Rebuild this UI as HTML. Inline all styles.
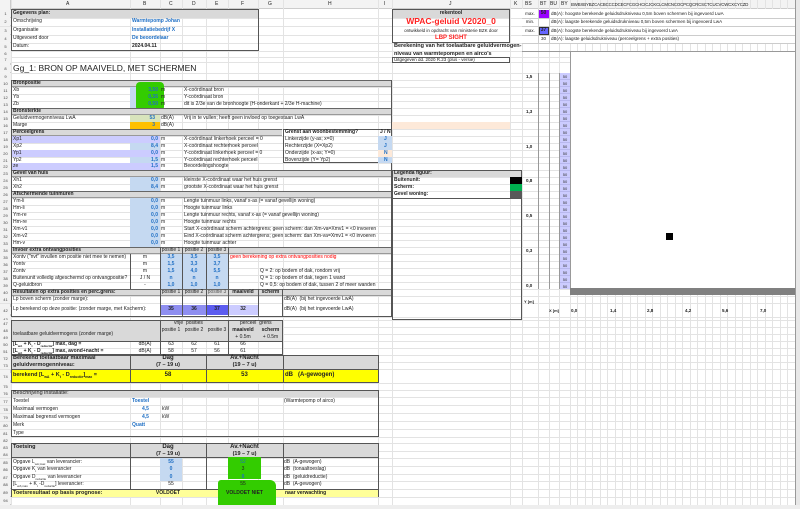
<!DOCTYPE html>
<html><head><meta charset="utf-8"><style>
*{margin:0;padding:0;box-sizing:border-box}
body{width:800px;height:509px;overflow:hidden;background:#fff;position:relative;font-family:"Liberation Sans",sans-serif}
.h{position:absolute;left:0;width:795px;height:1px;background:#e3e3e3}
.v{position:absolute;top:0;height:509px;width:1px;background:#e3e3e3}
.c{position:absolute;font-size:5px;line-height:7px;white-space:nowrap;color:#222}
.b{font-weight:bold}
.bl{color:#1f6fc4;font-weight:bold}
.r{text-align:right}.m{text-align:center}
.box{position:absolute}
.sec{position:absolute;background:#d9d9d9;border-top:1px solid #666;border-bottom:1px solid #999}
.rn{position:absolute;left:0;width:11px;font-size:4px;line-height:7px;text-align:center;color:#444;background:#f2f2f2}
</style></head><body>
<div class="box" style="left:0;top:0;width:800px;height:9px;background:#f3f3f3;border-bottom:1px solid #ccc"></div>
<div class="box" style="left:0;top:0;width:11px;height:509px;background:#f3f3f3;border-right:1px solid #ccc"></div>
<div class="h" style="top:18px"></div><div class="h" style="top:26px"></div><div class="h" style="top:35px"></div><div class="h" style="top:43px"></div><div class="h" style="top:51px"></div><div class="h" style="top:57px"></div><div class="h" style="top:62px"></div><div class="h" style="top:73px"></div><div class="h" style="top:80px"></div><div class="h" style="top:87px"></div><div class="h" style="top:94px"></div><div class="h" style="top:101px"></div><div class="h" style="top:108px"></div><div class="h" style="top:115px"></div><div class="h" style="top:122px"></div><div class="h" style="top:129px"></div><div class="h" style="top:136px"></div><div class="h" style="top:143px"></div><div class="h" style="top:150px"></div><div class="h" style="top:157px"></div><div class="h" style="top:163px"></div><div class="h" style="top:170px"></div><div class="h" style="top:177px"></div><div class="h" style="top:184px"></div><div class="h" style="top:191px"></div><div class="h" style="top:198px"></div><div class="h" style="top:205px"></div><div class="h" style="top:212px"></div><div class="h" style="top:219px"></div><div class="h" style="top:226px"></div><div class="h" style="top:233px"></div><div class="h" style="top:240px"></div><div class="h" style="top:247px"></div><div class="h" style="top:254px"></div><div class="h" style="top:261px"></div><div class="h" style="top:268px"></div><div class="h" style="top:275px"></div><div class="h" style="top:282px"></div><div class="h" style="top:289px"></div><div class="h" style="top:296px"></div><div class="h" style="top:303px"></div><div class="h" style="top:317px"></div><div class="h" style="top:320px"></div><div class="h" style="top:327px"></div><div class="h" style="top:334px"></div><div class="h" style="top:341px"></div><div class="h" style="top:348px"></div><div class="h" style="top:355px"></div><div class="h" style="top:362px"></div><div class="h" style="top:369px"></div><div class="h" style="top:383px"></div><div class="h" style="top:390px"></div><div class="h" style="top:397px"></div><div class="h" style="top:405px"></div><div class="h" style="top:413px"></div><div class="h" style="top:421px"></div><div class="h" style="top:429px"></div><div class="h" style="top:437px"></div><div class="h" style="top:443px"></div><div class="h" style="top:451px"></div><div class="h" style="top:458px"></div><div class="h" style="top:466px"></div><div class="h" style="top:474px"></div><div class="h" style="top:481px"></div><div class="h" style="top:489px"></div><div class="h" style="top:497px"></div><div class="h" style="top:505px"></div>
<div class="v" style="left:11px"></div><div class="v" style="left:130px"></div><div class="v" style="left:160px"></div><div class="v" style="left:182px"></div><div class="v" style="left:206px"></div><div class="v" style="left:228px"></div><div class="v" style="left:258px"></div><div class="v" style="left:283px"></div><div class="v" style="left:378px"></div><div class="v" style="left:392px"></div><div class="v" style="left:510px"></div><div class="v" style="left:522px"></div><div class="v" style="left:538px"></div><div class="v" style="left:549px"></div><div class="v" style="left:559px"></div><div class="v" style="left:570px"></div><div class="v" style="left:577px"></div><div class="v" style="left:585px"></div><div class="v" style="left:592px"></div><div class="v" style="left:600px"></div><div class="v" style="left:607px"></div><div class="v" style="left:615px"></div><div class="v" style="left:622px"></div><div class="v" style="left:630px"></div><div class="v" style="left:637px"></div><div class="v" style="left:645px"></div><div class="v" style="left:652px"></div><div class="v" style="left:660px"></div><div class="v" style="left:667px"></div><div class="v" style="left:675px"></div><div class="v" style="left:682px"></div><div class="v" style="left:690px"></div><div class="v" style="left:697px"></div><div class="v" style="left:705px"></div><div class="v" style="left:712px"></div><div class="v" style="left:720px"></div><div class="v" style="left:727px"></div><div class="v" style="left:735px"></div><div class="v" style="left:742px"></div><div class="v" style="left:750px"></div><div class="v" style="left:757px"></div><div class="v" style="left:765px"></div><div class="v" style="left:772px"></div><div class="v" style="left:780px"></div><div class="v" style="left:787px"></div>
<div class="box" style="left:795px;top:0;width:5px;height:509px;background:#e8e8e8;border-left:1px solid #999"></div>
<div class="box" style="left:0;top:505px;width:800px;height:4px;background:#eee"></div>

<div class="c" style="left:66px;top:1px">A</div><div class="c" style="left:143px;top:1px">B</div><div class="c" style="left:169px;top:1px">C</div><div class="c" style="left:192px;top:1px">D</div><div class="c" style="left:215px;top:1px">E</div><div class="c" style="left:241px;top:1px">F</div><div class="c" style="left:268px;top:1px">G</div><div class="c" style="left:328px;top:1px">H</div><div class="c" style="left:384px;top:1px">I</div><div class="c" style="left:449px;top:1px">J</div><div class="c" style="left:514px;top:1px">K</div><div class="c" style="left:525px;top:1px">BS</div><div class="c" style="left:540px;top:1px">BT</div><div class="c" style="left:550px;top:1px">BU</div><div class="c" style="left:561px;top:1px">BY</div>
<div class="c" style="left:571px;top:1px;font-size:4.3px;letter-spacing:-0.1px">BWBXBYBZCACBCCCDCECFCGCHCICJCKCLCMCNCOCPCQCRCSCTCUCVCWCXCYCZD</div>

<div class="rn" style="top:10px">1</div><div class="rn" style="top:18px">2</div><div class="rn" style="top:27px">3</div><div class="rn" style="top:35px">4</div><div class="rn" style="top:43px">5</div><div class="rn" style="top:50px">6</div><div class="rn" style="top:56px">7</div><div class="rn" style="top:65px">8</div><div class="rn" style="top:73px">9</div><div class="rn" style="top:80px">10</div><div class="rn" style="top:87px">11</div><div class="rn" style="top:94px">12</div><div class="rn" style="top:101px">13</div><div class="rn" style="top:108px">14</div><div class="rn" style="top:115px">15</div><div class="rn" style="top:122px">16</div><div class="rn" style="top:129px">17</div><div class="rn" style="top:136px">18</div><div class="rn" style="top:143px">19</div><div class="rn" style="top:150px">20</div><div class="rn" style="top:157px">21</div><div class="rn" style="top:163px">22</div><div class="rn" style="top:170px">23</div><div class="rn" style="top:177px">24</div><div class="rn" style="top:184px">25</div><div class="rn" style="top:191px">26</div><div class="rn" style="top:198px">27</div><div class="rn" style="top:205px">28</div><div class="rn" style="top:212px">29</div><div class="rn" style="top:219px">30</div><div class="rn" style="top:226px">31</div><div class="rn" style="top:233px">32</div><div class="rn" style="top:240px">33</div><div class="rn" style="top:247px">34</div><div class="rn" style="top:254px">35</div><div class="rn" style="top:261px">36</div><div class="rn" style="top:268px">37</div><div class="rn" style="top:275px">38</div><div class="rn" style="top:282px">39</div><div class="rn" style="top:289px">40</div><div class="rn" style="top:296px">41</div><div class="rn" style="top:307px">42</div><div class="rn" style="top:316px">43</div><div class="rn" style="top:320px">47</div><div class="rn" style="top:327px">48</div><div class="rn" style="top:334px">49</div><div class="rn" style="top:341px">50</div><div class="rn" style="top:348px">51</div><div class="rn" style="top:355px">72</div><div class="rn" style="top:362px">73</div><div class="rn" style="top:373px">74</div><div class="rn" style="top:383px">75</div><div class="rn" style="top:390px">76</div><div class="rn" style="top:398px">77</div><div class="rn" style="top:406px">78</div><div class="rn" style="top:414px">79</div><div class="rn" style="top:422px">80</div><div class="rn" style="top:430px">81</div><div class="rn" style="top:437px">82</div><div class="rn" style="top:444px">83</div><div class="rn" style="top:451px">84</div><div class="rn" style="top:459px">85</div><div class="rn" style="top:466px">86</div><div class="rn" style="top:474px">87</div><div class="rn" style="top:481px">88</div><div class="rn" style="top:489px">89</div><div class="rn" style="top:497px">94</div>

<div class="box" style="left:11px;top:9px;width:248px;height:42px;border:1px solid #555"></div>
<div class="box" style="left:12px;top:10px;width:246px;height:8px;background:#d9d9d9"></div>
<div class="c b" style="left:13px;top:10px">Gegevens plan:</div>
<div class="c" style="left:13px;top:18px">Omschrijving</div><div class="c bl" style="left:132px;top:18px">Warmtepomp Johan</div>
<div class="c" style="left:13px;top:27px">Organisatie</div><div class="c bl" style="left:132px;top:27px">Installatiebedrijf X</div>
<div class="c" style="left:13px;top:35px">Uitgevoerd door</div><div class="c bl" style="left:132px;top:35px">De beoordelaar</div>
<div class="c" style="left:13px;top:43px">Datum:</div><div class="c b" style="left:132px;top:43px">2024.04.11</div>
<div class="c" style="left:13px;top:63px;font-size:8.5px;line-height:10px">Gg_1: BRON OP MAAIVELD, MET SCHERMEN</div>

<div class="box" style="left:11px;top:80px;width:381px;height:237px;border:1px solid #555"></div>
<div class="sec" style="left:12px;top:80px;width:379px;height:7px"></div><div class="c b" style="left:13px;top:80px">Bronpositie</div>
<div class="box" style="left:130px;top:87px;width:30px;height:21px;background:#c5d9f1"></div>
<div class="box" style="left:136px;top:82px;width:28px;height:29px;background:#33cc00;border-radius:4px"></div>
<div class="c" style="left:13px;top:87px">Xb</div><div class="c bl r" style="left:130px;top:87px;width:28px">3,50</div><div class="c" style="left:161px;top:87px">m</div><div class="c" style="left:184px;top:87px">X-coördinaat bron</div>
<div class="c" style="left:13px;top:94px">Yb</div><div class="c bl r" style="left:130px;top:94px;width:28px">0,35</div><div class="c" style="left:161px;top:94px">m</div><div class="c" style="left:184px;top:94px">Y-coördinaat bron</div>
<div class="c" style="left:13px;top:101px">Zb</div><div class="c bl r" style="left:130px;top:101px;width:28px">0,50</div><div class="c" style="left:161px;top:101px">m</div><div class="c" style="left:184px;top:101px">dit is 2/3e van de bronhoogte (H-onderkant + 2/3e H-machine)</div>
<div class="sec" style="left:12px;top:108px;width:379px;height:7px"></div><div class="c b" style="left:13px;top:108px">Bronsterkte</div>
<div class="box" style="left:130px;top:115px;width:30px;height:7px;background:#d8e4bc"></div>
<div class="box" style="left:130px;top:122px;width:30px;height:7px;background:#ffc000"></div>
<div class="c" style="left:13px;top:115px">Geluidvermogenniveau LwA</div><div class="c bl r" style="left:130px;top:115px;width:25px">53</div><div class="c" style="left:161px;top:115px">dB(A)</div><div class="c" style="left:184px;top:115px">Vrij in te vullen; heeft geen invloed op toegestaan LwA</div>
<div class="c" style="left:13px;top:122px">Marge</div><div class="c bl r" style="left:130px;top:122px;width:25px">3</div><div class="c" style="left:161px;top:122px">dB(A)</div>
<div class="box" style="left:392px;top:122px;width:118px;height:7px;background:#fde9d9"></div>
<div class="sec" style="left:12px;top:129px;width:270px;height:7px"></div><div class="c b" style="left:13px;top:129px">Perceelgrens</div>
<div class="box" style="left:283px;top:129px;width:109px;height:34px;border:1px solid #555"></div>
<div class="c b" style="left:285px;top:129px">Grenst aan woonbestemming?</div><div class="c b" style="left:380px;top:129px">J / N</div>
<div class="box" style="left:12px;top:136px;width:148px;height:7px;background:#ccccff"></div>
<div class="box" style="left:130px;top:143px;width:30px;height:7px;background:#c5d9f1"></div>
<div class="box" style="left:12px;top:150px;width:148px;height:7px;background:#ccccff"></div>
<div class="box" style="left:130px;top:157px;width:30px;height:6px;background:#c5d9f1"></div>
<div class="box" style="left:12px;top:163px;width:148px;height:7px;background:#ccccff"></div>
<div class="c" style="left:13px;top:136px">Xp1</div><div class="c bl r" style="left:130px;top:136px;width:28px">0,0</div><div class="c" style="left:161px;top:136px">m</div><div class="c" style="left:184px;top:136px">X-coördinaat linkerhoek perceel = 0</div>
<div class="c" style="left:13px;top:143px">Xp2</div><div class="c bl r" style="left:130px;top:143px;width:28px">8,4</div><div class="c" style="left:161px;top:143px">m</div><div class="c" style="left:184px;top:143px">X-coördinaat rechterhoek perceel</div>
<div class="c" style="left:13px;top:150px">Yp1</div><div class="c bl r" style="left:130px;top:150px;width:28px">0,0</div><div class="c" style="left:161px;top:150px">m</div><div class="c" style="left:184px;top:150px">Y-coördinaat linkerhoek perceel = 0</div>
<div class="c" style="left:13px;top:157px">Yp2</div><div class="c bl r" style="left:130px;top:157px;width:28px">1,5</div><div class="c" style="left:161px;top:157px">m</div><div class="c" style="left:184px;top:157px">Y-coördinaat rechterhoek perceel</div>
<div class="c" style="left:13px;top:163px">ze</div><div class="c bl r" style="left:130px;top:163px;width:28px">1,5</div><div class="c" style="left:161px;top:163px">m</div><div class="c" style="left:184px;top:163px">Beoordelingshoogte</div>
<div class="box" style="left:378px;top:136px;width:14px;height:7px;background:#c5d9f1"></div><div class="box" style="left:378px;top:143px;width:14px;height:7px;background:#c5d9f1"></div><div class="box" style="left:378px;top:150px;width:14px;height:7px;background:#fde9d9"></div><div class="box" style="left:378px;top:157px;width:14px;height:6px;background:#c5d9f1"></div>
<div class="c" style="left:285px;top:136px">Linkerzijde (y-as; x=0)</div><div class="c bl" style="left:384px;top:136px">J</div>
<div class="c" style="left:285px;top:143px">Rechterzijde (X=Xp2)</div><div class="c bl" style="left:384px;top:143px">J</div>
<div class="c" style="left:285px;top:150px">Onderzijde (x-as; Y=0)</div><div class="c bl" style="left:384px;top:150px">N</div>
<div class="c" style="left:285px;top:157px">Bovenzijde (Y= Yp2)</div><div class="c bl" style="left:384px;top:157px">N</div>
<div class="sec" style="left:12px;top:170px;width:379px;height:7px"></div><div class="c b" style="left:13px;top:170px">Gevel van huis</div>
<div class="box" style="left:130px;top:177px;width:30px;height:14px;background:#c5d9f1"></div>
<div class="c" style="left:13px;top:177px">Xh1</div><div class="c bl r" style="left:130px;top:177px;width:28px">0,0</div><div class="c" style="left:161px;top:177px">m</div><div class="c" style="left:184px;top:177px">kleinste X-coördinaat waar het huis grenst</div>
<div class="c" style="left:13px;top:184px">Xh2</div><div class="c bl r" style="left:130px;top:184px;width:28px">8,4</div><div class="c" style="left:161px;top:184px">m</div><div class="c" style="left:184px;top:184px">grootste X-coördinaat waar het huis grenst</div>
<div class="sec" style="left:12px;top:191px;width:379px;height:7px"></div><div class="c b" style="left:13px;top:191px">Afschermende tuinmuren</div>
<div class="box" style="left:130px;top:198px;width:30px;height:49px;background:#c5d9f1"></div>
<div class="c" style="left:13px;top:198px">Ym-li</div><div class="c bl r" style="left:130px;top:198px;width:28px">0,0</div><div class="c" style="left:161px;top:198px">m</div><div class="c" style="left:184px;top:198px">Lengte tuinmuur links, vanaf x-as (= vanaf gevellijn woning)</div>
<div class="c" style="left:13px;top:205px">Hm-li</div><div class="c bl r" style="left:130px;top:205px;width:28px">0,0</div><div class="c" style="left:161px;top:205px">m</div><div class="c" style="left:184px;top:205px">Hoogte tuinmuur links</div>
<div class="c" style="left:13px;top:212px">Ym-re</div><div class="c bl r" style="left:130px;top:212px;width:28px">0,0</div><div class="c" style="left:161px;top:212px">m</div><div class="c" style="left:184px;top:212px">Lengte tuinmuur rechts, vanaf x-as (= vanaf gevellijn woning)</div>
<div class="c" style="left:13px;top:219px">Hm-re</div><div class="c bl r" style="left:130px;top:219px;width:28px">0,0</div><div class="c" style="left:161px;top:219px">m</div><div class="c" style="left:184px;top:219px">Hoogte tuinmuur rechts</div>
<div class="c" style="left:13px;top:226px">Xm-v1</div><div class="c bl r" style="left:130px;top:226px;width:28px">0,0</div><div class="c" style="left:161px;top:226px">m</div><div class="c" style="left:184px;top:226px">Start X-coördinaat scherm achtergrens; geen scherm: dan Xm-va=Xmv1 = &lt;0 invoeren</div>
<div class="c" style="left:13px;top:233px">Xm-v2</div><div class="c bl r" style="left:130px;top:233px;width:28px">0,0</div><div class="c" style="left:161px;top:233px">m</div><div class="c" style="left:184px;top:233px">Eind X-coördinaat scherm achtergrens; geen scherm: dan Xm-va=Xmv1 = &lt;0 invoeren</div>
<div class="c" style="left:13px;top:240px">Hm-v</div><div class="c bl r" style="left:130px;top:240px;width:28px">0,0</div><div class="c" style="left:161px;top:240px">m</div><div class="c" style="left:184px;top:240px">Hoogte tuinmuur achter</div>
<div class="sec" style="left:12px;top:247px;width:379px;height:7px"></div><div class="c b" style="left:13px;top:247px">Invoer extra ontvangposities</div>
<div class="c m" style="left:160px;top:247px;width:22px">positie 1</div><div class="c m" style="left:182px;top:247px;width:24px">positie 2</div><div class="c m" style="left:206px;top:247px;width:22px">positie 3</div>
<div class="box" style="left:160px;top:254px;width:68px;height:35px;background:#c5d9f1"></div>
<div class="box" style="left:160px;top:247px;width:1px;height:42px;background:#555"></div><div class="box" style="left:182px;top:247px;width:1px;height:42px;background:#555"></div><div class="box" style="left:206px;top:247px;width:1px;height:42px;background:#555"></div><div class="box" style="left:228px;top:247px;width:1px;height:42px;background:#555"></div><div class="box" style="left:130px;top:254px;width:1px;height:35px;background:#555"></div>
<div class="c" style="left:13px;top:254px">Xontv ("nvt" invullen om positie niet mee te nemen)</div><div class="c m" style="left:130px;top:254px;width:30px">m</div><div class="c bl m" style="left:160px;top:254px;width:22px">3,5</div><div class="c bl m" style="left:182px;top:254px;width:24px">3,5</div><div class="c bl m" style="left:206px;top:254px;width:22px">3,5</div><div class="c" style="left:230px;top:254px;color:#f00">geen berekening op extra ontvangposities nodig</div>
<div class="c" style="left:13px;top:261px">Yontv</div><div class="c m" style="left:130px;top:261px;width:30px">m</div><div class="c bl m" style="left:160px;top:261px;width:22px">1,5</div><div class="c bl m" style="left:182px;top:261px;width:24px">3,3</div><div class="c bl m" style="left:206px;top:261px;width:22px">3,7</div>
<div class="c" style="left:13px;top:268px">Zontv</div><div class="c m" style="left:130px;top:268px;width:30px">m</div><div class="c bl m" style="left:160px;top:268px;width:22px">1,5</div><div class="c bl m" style="left:182px;top:268px;width:24px">4,0</div><div class="c bl m" style="left:206px;top:268px;width:22px">5,5</div><div class="c" style="left:260px;top:268px">Q = 2: op bodem of dak, rondom vrij</div>
<div class="c" style="left:13px;top:275px">Buitenunit volledig afgeschermd op ontvangpositie?</div><div class="c m" style="left:130px;top:275px;width:30px">J / N</div><div class="c bl m" style="left:160px;top:275px;width:22px">n</div><div class="c bl m" style="left:182px;top:275px;width:24px">n</div><div class="c bl m" style="left:206px;top:275px;width:22px">n</div><div class="c" style="left:260px;top:275px">Q = 1: op bodem of dak, tegen 1 wand</div>
<div class="c" style="left:13px;top:282px">Q-geluidbron</div><div class="c m" style="left:130px;top:282px;width:30px">-</div><div class="c bl m" style="left:160px;top:282px;width:22px">1,0</div><div class="c bl m" style="left:182px;top:282px;width:24px">1,0</div><div class="c bl m" style="left:206px;top:282px;width:22px">1,0</div><div class="c" style="left:260px;top:282px">Q = 0,5: op bodem of dak, tussen 2 of meer wanden</div>
<div class="sec" style="left:12px;top:289px;width:379px;height:7px"></div><div class="c b" style="left:13px;top:289px">Resultaten op extra posities en perc.grens:</div>
<div class="c m" style="left:160px;top:289px;width:22px">positie 1</div><div class="c m" style="left:182px;top:289px;width:24px">positie 2</div><div class="c m" style="left:206px;top:289px;width:22px;color:#555">positie 3</div><div class="c b m" style="left:228px;top:289px;width:30px">maaiveld</div><div class="c b m" style="left:258px;top:289px;width:25px">scherm</div>
<div class="box" style="left:160px;top:289px;width:123px;height:28px;border-left:1px solid #555;border-right:1px solid #555"></div>
<div class="box" style="left:182px;top:289px;width:1px;height:28px;background:#555"></div><div class="box" style="left:206px;top:289px;width:1px;height:28px;background:#555"></div><div class="box" style="left:228px;top:289px;width:1px;height:28px;background:#555"></div><div class="box" style="left:258px;top:289px;width:1px;height:28px;background:#555"></div>
<div class="c" style="left:13px;top:296px">Lp boven scherm (zonder marge):</div><div class="c" style="left:284px;top:296px">dB(A)&nbsp; (bij het ingevoerde LwA)</div>
<div class="box" style="left:161px;top:305px;width:21px;height:10px;background:#8e8ef0"></div><div class="box" style="left:183px;top:305px;width:23px;height:10px;background:#8e8ef0"></div><div class="box" style="left:207px;top:305px;width:21px;height:10px;background:#5c5cf0"></div><div class="box" style="left:229px;top:305px;width:29px;height:10px;background:#ccccff"></div>
<div class="c" style="left:13px;top:306px">Lp berekend op deze positie: (zonder marge, met Kscherm):</div><div class="c b m" style="left:160px;top:306px;width:22px">35</div><div class="c b m" style="left:182px;top:306px;width:24px">36</div><div class="c b m" style="left:206px;top:306px;width:22px">37</div><div class="c b m" style="left:228px;top:306px;width:30px">32</div><div class="c" style="left:284px;top:306px">dB(A)&nbsp; (bij het ingevoerde LwA)</div>

<div class="box" style="left:11px;top:320px;width:272px;height:35px;border:1px solid #555"></div>
<div class="box" style="left:12px;top:321px;width:270px;height:20px;background:#d9d9d9"></div>
<div class="box" style="left:160px;top:320px;width:1px;height:35px;background:#555"></div><div class="box" style="left:228px;top:320px;width:1px;height:35px;background:#555"></div><div class="box" style="left:12px;top:341px;width:270px;height:1px;background:#555"></div>
<div class="c" style="left:174px;top:320px">vrije&nbsp; posities</div><div class="c" style="left:240px;top:320px">perceel&nbsp; grens</div>
<div class="c" style="left:13px;top:331px">toelaatbare geluidvermogens (zonder marge)</div>
<div class="c m" style="left:160px;top:327px;width:22px">positie 1</div><div class="c m" style="left:182px;top:327px;width:24px">positie 2</div><div class="c m" style="left:206px;top:327px;width:22px">positie 3</div><div class="c b m" style="left:228px;top:327px;width:30px">maaiveld</div><div class="c b m" style="left:258px;top:327px;width:25px">scherm</div>
<div class="c m" style="left:228px;top:334px;width:30px">+ 0.5m</div><div class="c m" style="left:258px;top:334px;width:25px">+ 0.5m</div>
<div class="c b" style="left:13px;top:341px">[L<sub style="font-size:3px">wA</sub> + K<sub style="font-size:3px">t</sub> - D<sub style="font-size:3px">reductie</sub>] max, dag =</div><div class="c m" style="left:130px;top:341px;width:30px">dB(A)</div><div class="c m" style="left:160px;top:341px;width:22px">63</div><div class="c m" style="left:182px;top:341px;width:24px">62</div><div class="c m" style="left:206px;top:341px;width:22px">61</div><div class="c m" style="left:228px;top:341px;width:30px">66</div>
<div class="c b" style="left:13px;top:348px">[L<sub style="font-size:3px">wA</sub> + K<sub style="font-size:3px">t</sub> - D<sub style="font-size:3px">reductie</sub>] max, avond+nacht =</div><div class="c m" style="left:130px;top:348px;width:30px">dB(A)</div><div class="c m" style="left:160px;top:348px;width:22px">58</div><div class="c m" style="left:182px;top:348px;width:24px">57</div><div class="c m" style="left:206px;top:348px;width:22px">56</div><div class="c m" style="left:228px;top:348px;width:30px">61</div>

<div class="box" style="left:11px;top:355px;width:368px;height:28px;border:1px solid #555;background:#d9d9d9"></div>
<div class="box" style="left:12px;top:369px;width:366px;height:13px;background:#ffff00;border-top:1px solid #555"></div>
<div class="box" style="left:130px;top:355px;width:1px;height:28px;background:#555"></div><div class="box" style="left:206px;top:355px;width:1px;height:28px;background:#555"></div><div class="box" style="left:283px;top:355px;width:1px;height:28px;background:#555"></div>
<div class="c b" style="left:13px;top:355px;font-size:5.5px">Berekend toelaatbaar maximaal</div><div class="c b" style="left:13px;top:362px;font-size:5.5px">geluidvermogenniveau:</div>
<div class="c b m" style="left:130px;top:355px;width:76px;font-size:6px">Dag</div><div class="c b m" style="left:130px;top:362px;width:76px;font-size:5.5px">(7 – 19 u)</div>
<div class="c b m" style="left:206px;top:355px;width:77px;font-size:6px">Av.+Nacht</div><div class="c b m" style="left:206px;top:362px;width:77px;font-size:5.5px">(19 – 7 u)</div>
<div class="c b" style="left:13px;top:372px;font-size:5.5px">berekend [L<sub style="font-size:3.5px">wA</sub> + K<sub style="font-size:3.5px">t</sub> - D<sub style="font-size:3.5px">reductie</sub>]<sub style="font-size:3.5px">max</sub> =</div>
<div class="c b m" style="left:130px;top:372px;width:76px;font-size:6px">58</div><div class="c b m" style="left:206px;top:372px;width:77px;font-size:6px">53</div><div class="c b" style="left:285px;top:372px;font-size:6px">dB&nbsp;&nbsp; (A-gewogen)</div>

<div class="box" style="left:11px;top:390px;width:368px;height:47px;border:1px solid #555"></div>
<div class="box" style="left:12px;top:391px;width:366px;height:6px;background:#d9d9d9"></div>
<div class="c" style="left:13px;top:390px;font-size:5.5px">Beschrijving installatie:</div>
<div class="c" style="left:13px;top:398px">Toestel</div><div class="c bl" style="left:132px;top:398px">Toestel</div><div class="c" style="left:284px;top:398px">(Warmtepomp of airco)</div>
<div class="c" style="left:13px;top:406px">Maximaal vermogen</div><div class="c bl" style="left:142px;top:406px">4,5</div><div class="c" style="left:162px;top:406px">kW</div>
<div class="c" style="left:13px;top:414px">Maximaal begrensd vermogen</div><div class="c bl" style="left:142px;top:414px">4,5</div><div class="c" style="left:162px;top:414px">kW</div>
<div class="c" style="left:13px;top:422px">Merk</div><div class="c bl" style="left:132px;top:422px">Quatt</div>
<div class="c" style="left:13px;top:430px">Type</div>

<div class="box" style="left:11px;top:443px;width:368px;height:54px;border:1px solid #555"></div>
<div class="box" style="left:12px;top:444px;width:366px;height:14px;background:#d9d9d9;border-bottom:1px solid #555"></div>
<div class="box" style="left:130px;top:443px;width:1px;height:54px;background:#555"></div><div class="box" style="left:206px;top:443px;width:1px;height:54px;background:#555"></div><div class="box" style="left:283px;top:443px;width:1px;height:54px;background:#555"></div>
<div class="c b" style="left:13px;top:444px;font-size:5.5px">Toetsing</div>
<div class="c b m" style="left:130px;top:444px;width:76px;font-size:6px">Dag</div><div class="c b m" style="left:130px;top:451px;width:76px;font-size:5.5px">(7 – 19 u)</div>
<div class="c b m" style="left:206px;top:444px;width:77px;font-size:6px">Av.+Nacht</div><div class="c b m" style="left:206px;top:451px;width:77px;font-size:5.5px">(19 – 7 u)</div>
<div class="box" style="left:160px;top:458px;width:22px;height:23px;background:#c5d9f1"></div>
<div class="box" style="left:228px;top:457px;width:33px;height:22px;background:#33cc00"></div>
<div class="box" style="left:218px;top:480px;width:58px;height:25px;background:#33cc00;border-radius:3px 6px 8px 4px"></div>
<div class="c" style="left:13px;top:459px">Opgave L<sub style="font-size:3px">wA;max</sub> van leverancier:</div><div class="c bl m" style="left:160px;top:459px;width:22px">55</div><div class="c m" style="left:228px;top:459px;width:30px;color:#1f6fc4">52</div><div class="c" style="left:284px;top:459px">dB&nbsp; (A-gewogen)</div>
<div class="c" style="left:13px;top:466px">Opgave K<sub style="font-size:3px">t</sub> van leverancier</div><div class="c bl m" style="left:160px;top:466px;width:22px">0</div><div class="c m" style="left:228px;top:466px;width:30px">3</div><div class="c" style="left:284px;top:466px">dB&nbsp; (tonaaltoeslag)</div>
<div class="c" style="left:13px;top:474px">Opgave D<sub style="font-size:3px">reductie</sub> van leverancier</div><div class="c bl m" style="left:160px;top:474px;width:22px">0</div><div class="c bl m" style="left:228px;top:474px;width:30px">0</div><div class="c" style="left:284px;top:474px">dB&nbsp; (geluidreductie)</div>
<div class="c" style="left:13px;top:481px">[L<sub style="font-size:3px">wA;max</sub> + K<sub style="font-size:3px">t</sub> -D<sub style="font-size:3px">reductie</sub>] leverancier:</div><div class="c m" style="left:160px;top:481px;width:22px">55</div><div class="c m" style="left:228px;top:481px;width:30px">55</div><div class="c" style="left:284px;top:481px">dB&nbsp; (A-gewogen)</div>
<div class="box" style="left:12px;top:489px;width:366px;height:8px;background:#ffff99;border-top:1px solid #555"></div>
<div class="box" style="left:218px;top:489px;width:58px;height:16px;background:#33cc00"></div>
<div class="c b" style="left:13px;top:490px;font-size:5.5px">Toetsresultaat op basis prognose:</div><div class="c b m" style="left:130px;top:490px;width:76px">VOLDOET</div><div class="c b m" style="left:206px;top:490px;width:77px">VOLDOET NIET</div><div class="c b" style="left:285px;top:490px">naar verwachting</div>

<div class="box" style="left:392px;top:9px;width:118px;height:34px;border:1px solid #555"></div>
<div class="box" style="left:393px;top:10px;width:116px;height:8px;background:#d9d9d9"></div>
<div class="c b m" style="left:392px;top:10px;width:118px">rekentool</div>
<div class="c b m" style="left:392px;top:16px;width:118px;color:#f22;font-size:8.5px;line-height:11px">WPAC-geluid V2020_0</div>
<div class="c m" style="left:392px;top:27px;width:118px;font-size:4.5px">ontwikkeld in opdracht van ministerie BZK door</div>
<div class="c b m" style="left:392px;top:35px;width:118px;color:#f22;font-size:6px">LBP SIGHT</div>
<div class="c b" style="left:394px;top:43px;font-size:5.5px">Berekening van het toelaatbare geluidvermogen-</div>
<div class="c b" style="left:394px;top:51px;font-size:5.5px">niveau van warmtepompen en airco's</div>
<div class="box" style="left:392px;top:57px;width:118px;height:6px;border:1px solid #555"></div>
<div class="c" style="left:394px;top:56px;font-size:4.5px">Uitgegeven dd. 2020 R.23 (plus - versie)</div>
<div class="box" style="left:392px;top:170px;width:130px;height:150px;border:1px solid #555"></div>
<div class="box" style="left:393px;top:171px;width:128px;height:6px;background:#d9d9d9"></div>
<div class="box" style="left:392px;top:198px;width:130px;height:1px;background:#555"></div>
<div class="c b" style="left:394px;top:170px">Legenda figuur:</div>
<div class="c b" style="left:394px;top:177px">Buitenunit:</div><div class="box" style="left:510px;top:177px;width:12px;height:7px;background:#000"></div>
<div class="c b" style="left:394px;top:184px">Scherm:</div><div class="box" style="left:510px;top:184px;width:12px;height:7px;background:#00b050"></div>
<div class="c b" style="left:394px;top:191px">Gevel woning:</div><div class="box" style="left:510px;top:191px;width:12px;height:7px;background:#595959"></div>

<div class="box" style="left:522px;top:9px;width:273px;height:34px;background:#fff"></div>
<div class="box" style="left:522px;top:18px;width:273px;height:1px;background:#ccc"></div><div class="box" style="left:522px;top:26px;width:273px;height:1px;background:#ccc"></div><div class="box" style="left:522px;top:35px;width:273px;height:1px;background:#ccc"></div><div class="box" style="left:522px;top:43px;width:273px;height:1px;background:#ccc"></div>
<div class="box" style="left:538px;top:9px;width:1px;height:34px;background:#ccc"></div><div class="box" style="left:549px;top:9px;width:1px;height:34px;background:#ccc"></div>
<div class="box" style="left:539px;top:10px;width:10px;height:8px;background:#9900ff"></div>
<div class="box" style="left:539px;top:27px;width:10px;height:8px;background:#6666ff;border:1px solid #333"></div>
<div class="c m" style="left:522px;top:10px;width:16px;font-size:4.5px">max.</div><div class="c b m" style="left:538px;top:10px;width:11px">50</div><div class="c" style="left:551px;top:10px;font-size:4.5px">dB(A): hoogste berekende geluidsdrukniveau 0,5m boven schermen bij ingevoerd LwA</div>
<div class="c m" style="left:522px;top:18px;width:16px;font-size:4.5px">min.</div><div class="c" style="left:551px;top:18px;font-size:4.5px">dB(A): laagste berekende geluidsdrukniveau 0,5m boven schermen bij ingevoerd LwA</div>
<div class="c m" style="left:522px;top:27px;width:16px;font-size:4.5px">max.</div><div class="c b m" style="left:538px;top:27px;width:11px">37</div><div class="c" style="left:551px;top:27px;font-size:4.5px">dB(A): hoogste berekende geluidsdrukniveau bij ingevoerd LwA</div>
<div class="c m" style="left:538px;top:35px;width:11px;font-size:4.5px">30</div><div class="c" style="left:551px;top:35px;font-size:4.5px">dB(A): laagste geluidsdrukniveau (perceelgrens + extra posities)</div>

<div class="box" style="left:570px;top:52px;width:225px;height:236px;background:#fff;border-left:1px solid #999"></div>
<div class="box" style="left:522px;top:51px;width:273px;height:1px;background:#999"></div>
<div class="box" style="left:570px;top:288px;width:225px;height:7px;background:#808080"></div>
<div class="box" style="left:666px;top:233px;width:7px;height:7px;background:#000"></div>
<div class="box" style="left:538px;top:73px;width:1px;height:216px;background:#999"></div><div class="box" style="left:549px;top:73px;width:1px;height:216px;background:#999"></div>
<div class="box" style="left:559px;top:73px;width:11px;height:216px;border-left:1px solid #999;background-image:repeating-linear-gradient(#ccccff 0,#ccccff 6px,#b8b8ee 6px,#b8b8ee 7px)"></div>
<div class="c" style="left:560px;top:73px;width:10px;font-size:4px;line-height:7px;text-align:center;color:#333">50<br>50<br>50<br>50<br>50<br>50<br>50<br>50<br>50<br>50<br>50<br>50<br>50<br>50<br>50<br>50<br>50<br>50<br>50<br>50<br>50<br>50<br>50<br>50<br>50<br>50<br>50<br>50<br>50<br>50<br>50</div>
<div class="c b" style="left:526px;top:73px;font-size:4.5px">1,5</div>
<div class="c b" style="left:526px;top:108px;font-size:4.5px">1,3</div>
<div class="c b" style="left:526px;top:143px;font-size:4.5px">1,0</div>
<div class="c b" style="left:526px;top:177px;font-size:4.5px">0,8</div>
<div class="c b" style="left:526px;top:212px;font-size:4.5px">0,5</div>
<div class="c b" style="left:526px;top:247px;font-size:4.5px">0,3</div>
<div class="c b" style="left:526px;top:282px;font-size:4.5px">0,0</div>
<div class="c b" style="left:524px;top:298px;font-size:4px">Y [m]</div>
<div class="c b" style="left:549px;top:307px;font-size:4px">X [m]</div>
<div class="c b" style="left:571px;top:307px;font-size:4.5px">0,0</div><div class="c b" style="left:610px;top:307px;font-size:4.5px">1,4</div><div class="c b" style="left:647px;top:307px;font-size:4.5px">2,8</div><div class="c b" style="left:685px;top:307px;font-size:4.5px">4,2</div><div class="c b" style="left:722px;top:307px;font-size:4.5px">5,6</div><div class="c b" style="left:760px;top:307px;font-size:4.5px">7,0</div>
</body></html>
